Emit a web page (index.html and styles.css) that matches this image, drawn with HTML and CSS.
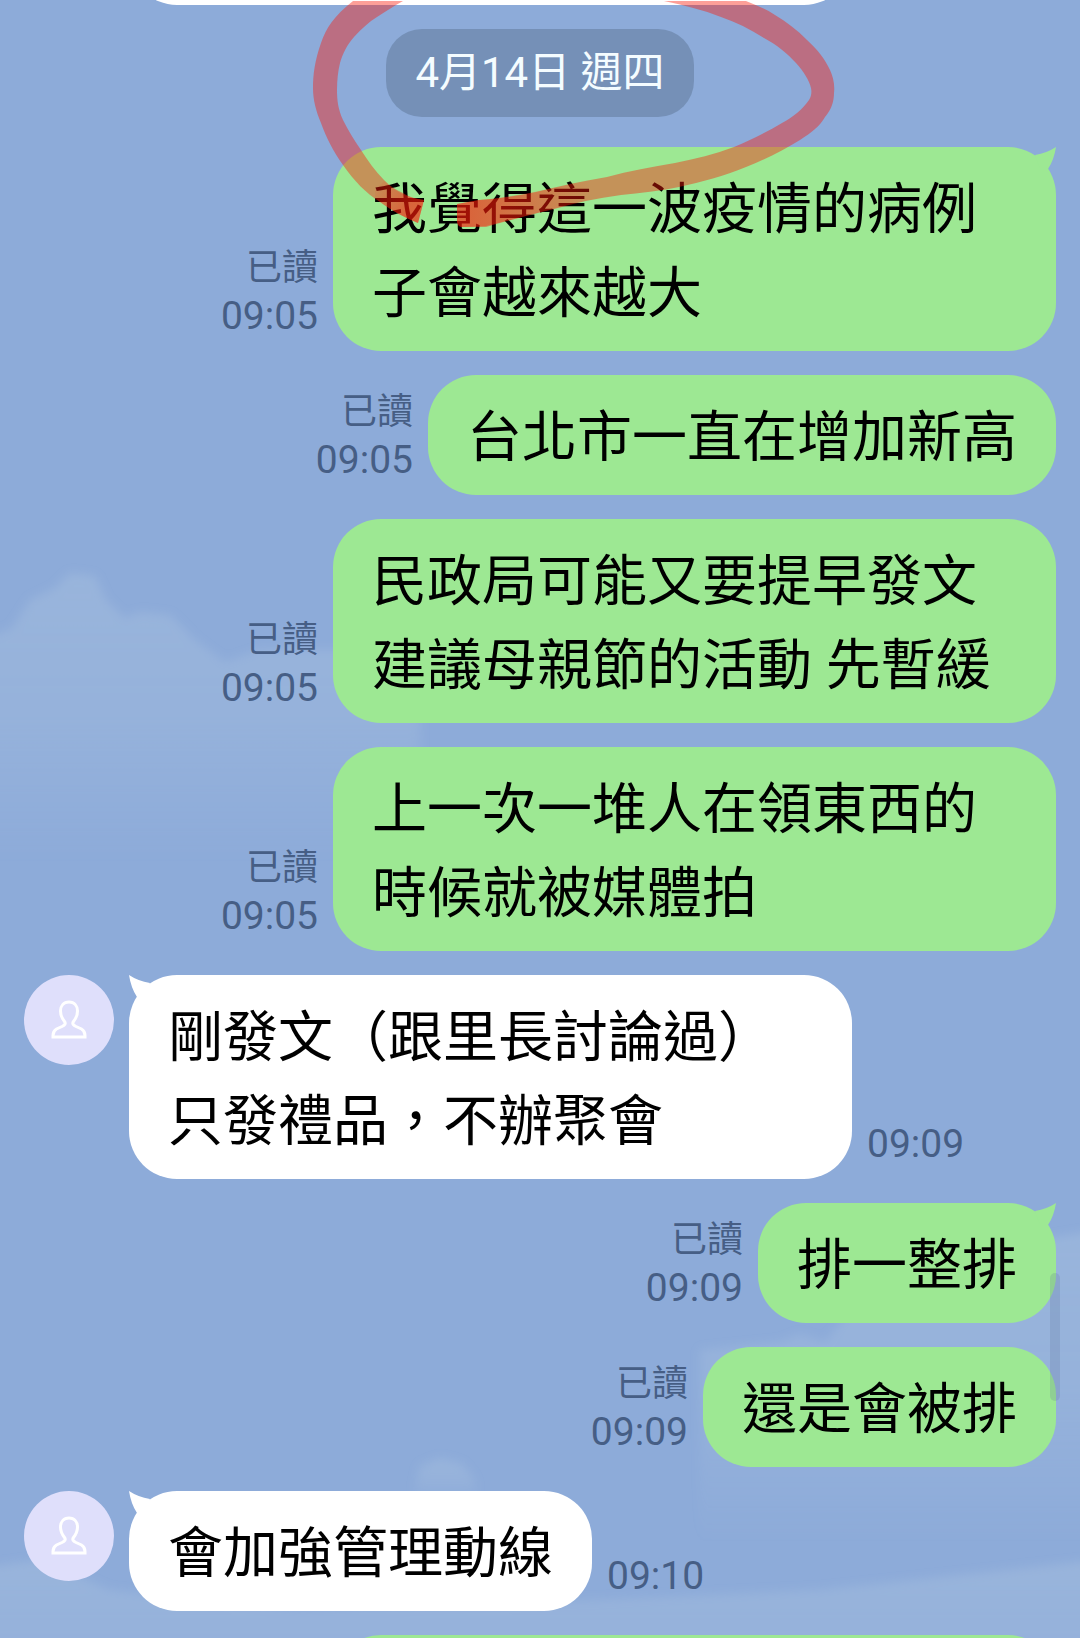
FILE: index.html
```html
<!DOCTYPE html>
<html lang="zh-Hant">
<head>
    <meta charset="UTF-8">
    <meta name="viewport" content="width=device-width, initial-scale=1.0">
    <title>聊天</title>
    <link rel="stylesheet" href="styles.css">
</head>
<body>
    <main class="chat">
        <!-- 背景的雲 -->
        <svg class="clouds" viewBox="0 0 1080 1638" preserveAspectRatio="xMinYMin slice">
            <defs>
                <filter id="soft" x="-20%" y="-20%" width="140%" height="140%"><feGaussianBlur stdDeviation="5"/></filter>
                <linearGradient id="cloud" x1="0" y1="0" x2="0" y2="1">
                    <stop offset="0" stop-color="#b4cbe2" stop-opacity=".3"/>
                    <stop offset=".5" stop-color="#b4cbe2" stop-opacity=".22"/>
                    <stop offset="1" stop-color="#b4cbe2" stop-opacity="0"/>
                </linearGradient>
            </defs>
            <g fill="url(#cloud)" filter="url(#soft)">
                <path d="M-20 640L12 628L30 600L55 588L70 573L95 576L106 600L125 618L140 612L170 615L195 640L225 662L260 650L420 650V860H-20Z"/>
                <path d="M700 1350L780 1342L800 1334L825 1342L860 1300L960 1285L1000 1270L1040 1240L1100 1230V1540H700Z"/>
                <path d="M414 1492L420 1466L440 1458L462 1464L474 1478L478 1500H414Z"/>
                <path d="M-20 1568L40 1560L110 1590L300 1610L600 1600L820 1590L1100 1560V1700H-20Z"/>
            </g>
        </svg>

        <!-- 上一則訊息的底部 -->
        <div class="message-cut">
            <div class="bubble received"></div>
        </div>

        <time class="date" datetime="04-14">4月14日 週四</time>

        <div class="messages">
            <div class="message mine">
                <div class="meta"><span>已讀</span><time>09:05</time></div>
                <p class="bubble sent">我覺得這一波疫情的病例子會越來越大
                    <svg class="tail" viewBox="0 0 24 24"><path d="M24 0Q15 6 3 8L8 22L16 22Q22 13 24 0Z"/></svg>
                </p>
            </div>
            <div class="message mine">
                <div class="meta"><span>已讀</span><time>09:05</time></div>
                <p class="bubble sent">台北市一直在增加新高</p>
            </div>
            <div class="message mine">
                <div class="meta"><span>已讀</span><time>09:05</time></div>
                <p class="bubble sent">民政局可能又要提早發文建議母親節的活動 先暫緩</p>
            </div>
            <div class="message mine">
                <div class="meta"><span>已讀</span><time>09:05</time></div>
                <p class="bubble sent">上一次一堆人在領東西的時候就被媒體拍</p>
            </div>

            <div class="message">
                <div class="avatar">
                    <svg viewBox="0 0 90 90"><path d="M45 27C39.500 27 36.500 31 36.500 36C36.500 41 38.500 44 40.500 46.500C42 48.500 41 50 38 51.500L32.500 54C30 55.500 29 57.500 29 60.500V62H61V60.500C61 57.500 60 55.500 57.500 54L52 51.500C49 50 48 48.500 49.500 46.500C51.500 44 53.500 41 53.500 36C53.500 31 50.500 27 45 27Z"/></svg>
                </div>
                <p class="bubble received">剛發文（跟里長討論過）只發禮品，不辦聚會
                    <svg class="tail" viewBox="0 0 24 24"><path d="M0 0Q9 6 21 8L16 22L8 22Q2 13 0 0Z"/></svg>
                </p>
                <div class="meta"><time>09:09</time></div>
            </div>

            <div class="message mine">
                <div class="meta"><span>已讀</span><time>09:09</time></div>
                <p class="bubble sent">排一整排
                    <svg class="tail" viewBox="0 0 24 24"><path d="M24 0Q15 6 3 8L8 22L16 22Q22 13 24 0Z"/></svg>
                </p>
            </div>
            <div class="message mine">
                <div class="meta"><span>已讀</span><time>09:09</time></div>
                <p class="bubble sent">還是會被排</p>
            </div>

            <div class="message">
                <div class="avatar">
                    <svg viewBox="0 0 90 90"><path d="M45 27C39.500 27 36.500 31 36.500 36C36.500 41 38.500 44 40.500 46.500C42 48.500 41 50 38 51.500L32.500 54C30 55.500 29 57.500 29 60.500V62H61V60.500C61 57.500 60 55.500 57.500 54L52 51.500C49 50 48 48.500 49.500 46.500C51.500 44 53.500 41 53.500 36C53.500 31 50.500 27 45 27Z"/></svg>
                </div>
                <p class="bubble received">會加強管理動線
                    <svg class="tail" viewBox="0 0 24 24"><path d="M0 0Q9 6 21 8L16 22L8 22Q2 13 0 0Z"/></svg>
                </p>
                <div class="meta"><time>09:10</time></div>
            </div>

            <!-- 下一則訊息的頂部 -->
            <div class="message mine">
                <div class="bubble sent long"></div>
            </div>
        </div>

        <!-- 日期上的紅筆圈 -->
        <svg class="marker" viewBox="300 0 560 240">
            <defs>
                <linearGradient id="fade" gradientUnits="userSpaceOnUse" x1="470" y1="0" x2="590" y2="0">
                    <stop offset="0" stop-color="#fa1b0a"/>
                    <stop offset="1" stop-color="#fa1b0a" stop-opacity="0"/>
                </linearGradient>
                <linearGradient id="fadeLeft" gradientUnits="userSpaceOnUse" x1="375" y1="180" x2="410" y2="205">
                    <stop offset="0" stop-color="#fa1b0a" stop-opacity="0"/>
                    <stop offset="1" stop-color="#fa1b0a"/>
                </linearGradient>
            </defs>
            <g fill="#fa1b0a" fill-opacity=".42">
                <path d="M353 1C334 16 326 28 321 43C315 60 313 74 313 88C313 100 316 111 321 123C326 137 333 151 343 165C354 181 366 193 380 202C392 211 404 217 418 223L424 200C417 199 409 197 403 193C396 190 390 186 384 180C375 171 368 161 361 150C354 140 348 130 343 120C338 109 337 100 337 90C337 80 338 71 340 63C343 53 347 45 354 37C361 29 369 22 377 17C386 11 394 6 403 1Z"/>
                <path d="M664 1C684 5 703 10 721 17C736 22 750 29 764 38C777 45 788 54 796 63C804 72 809 80 811 88C812 93 811 97 809 100C803 109 793 117 782 123C767 132 751 140 734 147C715 154 695 159 675 163C652 167 629 171 607 177C583 181 559 186 536 192C517 196 498 199 479 200L457 204V222Q458 227 462 227H486C507 221 528 215 550 210C574 203 597 198 621 195C640 193 660 191 679 187C702 182 724 176 746 167C766 159 784 150 800 140C811 133 820 126 825 117C831 110 834 102 834 93C835 84 833 77 830 70C825 59 817 49 807 40C797 30 787 22 775 15C766 9 756 5 746 1Z"/>
            </g>
            <g fill-opacity=".38">
                <path fill="url(#fadeLeft)" d="M375 190L384 181C394 190 406 198 424 200L418 223C404 217 392 211 375 198Z"/>
                <path fill="url(#fade)" d="M457 204L479 200C517 197 555 187 590 181V201C555 208 520 218 486 226L462 227Q458 227 457 222Z"/>
            </g>
        </svg>

        <div class="scroll-thumb"></div>
    </main>
</body>
</html>
```

FILE: styles.css
```css
/* Estilo general */
* {
    box-sizing: border-box;
}
body {
    margin: 0;
    font-family: Roboto, "Noto Sans CJK TC", sans-serif;
    background-color: #8dabd9;
}
.chat {
    position: relative;
    height: 100vh;
    overflow: hidden;
    display: flex;
    flex-direction: column;
}
.clouds {
    position: absolute;
    top: 0;
    left: 0;
    width: 100%;
    height: 100%;
    z-index: -1;
}

/* ========== Fecha ========== */
.date {
    flex-shrink: 0;
    align-self: center;
    margin: 24px 0 30px;
    padding: 20px 29px;
    border-radius: 36px;
    background-color: #7590b7;
    color: #f4fcff;
    font-size: 42px;
    line-height: 48px;
}

/* ========== Mensajes ========== */
.messages {
    display: flex;
    flex-direction: column;
    gap: 24px;
    padding: 0 24px;
}
.message {
    display: flex;
    align-items: flex-end;
    gap: 15px;
}
.message.mine {
    justify-content: flex-end;
}
.bubble {
    position: relative;
    flex-shrink: 0;
    max-width: 723px;
    min-height: 120px;
    margin: 0;
    padding: 20px 39px 16px;
    border-radius: 48px;
    color: #000;
    font-size: 55px;
    line-height: 84px;
}
.sent {
    background-color: #9de893;
}
.received {
    background-color: #fff;
}
.long {
    width: 723px;
}

/* Mensaje anterior, solo se ve el borde */
.message-cut {
    flex-shrink: 0;
    display: flex;
    align-items: flex-end;
    height: 5px;
    padding-left: 129px;
    overflow: hidden;
}
.message-cut .bubble {
    width: 723px;
}

/* Pico de la burbuja */
.tail {
    position: absolute;
    top: 0;
    width: 24px;
    height: 24px;
}
.sent .tail {
    right: 0;
    fill: #9de893;
}
.received .tail {
    left: 0;
    fill: #fff;
}

/* Leído y hora */
.meta {
    display: flex;
    flex-direction: column;
    align-items: flex-end;
    padding-bottom: 11px;
    color: #465e85;
    font-size: 39px;
    line-height: 48px;
}
.meta span {
    font-size: 36px;
}

.avatar {
    flex-shrink: 0;
    align-self: flex-start;
    width: 90px;
    height: 90px;
    border-radius: 50%;
    background-color: #dfdffb;
}
.avatar svg {
    display: block;
    fill: none;
    stroke: #fff;
    stroke-width: 3;
}

/* ========== Capas superiores ========== */
.marker {
    position: absolute;
    top: 0;
    left: 300px;
    width: 560px;
    height: 240px;
    pointer-events: none;
}
.scroll-thumb {
    position: absolute;
    top: 1273px;
    right: 20px;
    width: 10px;
    height: 128px;
    border-radius: 5px;
    background-color: rgba(90, 110, 150, 0.2);
}
```
